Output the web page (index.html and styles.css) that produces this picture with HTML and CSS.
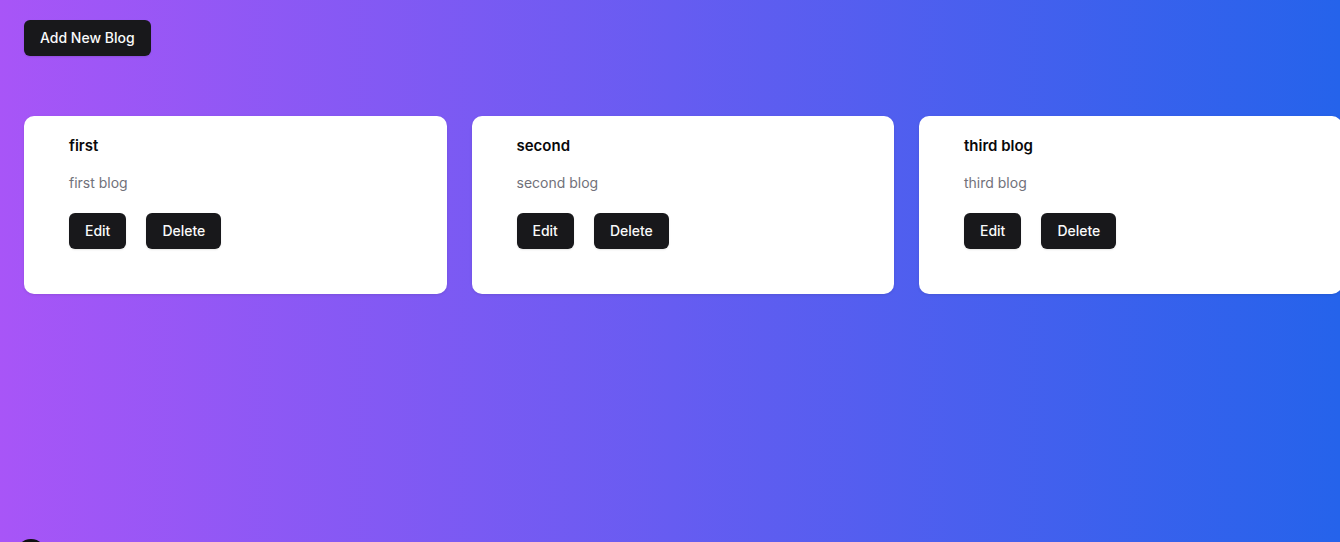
FILE: index.html
```html
<!DOCTYPE html>
<html>
<head>
<meta charset="utf-8">
<link rel="stylesheet" href="styles.css">
</head>
<body>
<main class="page">
  <div class="toolbar">
    <button class="btn">Add New Blog</button>
  </div>
  <div class="grid">
    <div class="card">
      <h2 class="title">first</h2>
      <p class="desc">first blog</p>
      <div class="actions">
        <button class="btn">Edit</button>
        <button class="btn">Delete</button>
      </div>
    </div>
    <div class="card">
      <h2 class="title">second</h2>
      <p class="desc">second blog</p>
      <div class="actions">
        <button class="btn">Edit</button>
        <button class="btn">Delete</button>
      </div>
    </div>
    <div class="card">
      <h2 class="title">third blog</h2>
      <p class="desc">third blog</p>
      <div class="actions">
        <button class="btn">Edit</button>
        <button class="btn">Delete</button>
      </div>
    </div>
  </div>
</main>
<div class="dev-dot"></div>
</body>
</html>
```
FILE: styles.css
```css
html, body {
  margin: 0;
  padding: 0;
  height: 100%;
  overflow: hidden;
}
body {
  font-family: Inter, "Liberation Sans", sans-serif;
  background: linear-gradient(to right, #a855f7, #2563eb);
}
.page {
  padding: 20px 0 0 24px;
}
.toolbar {
  display: flex;
}
.btn {
  font-family: Inter, "Liberation Sans", sans-serif;
  font-size: 14px;
  font-weight: 500;
  line-height: 20px;
  color: #fafafa;
  background: #18181b;
  border: none;
  border-radius: 6px;
  height: 36px;
  padding: 0 16px;
  box-shadow: 0 1px 2px rgba(0,0,0,0.1);
  cursor: pointer;
}
.grid {
  margin-top: 60px;
  display: grid;
  grid-template-columns: repeat(3, 422.5px);
  column-gap: 25px;
  width: 1318px;
}
.card {
  background: #ffffff;
  border-radius: 10px;
  padding: 19px 45px 45px;
  height: 178px;
  box-sizing: border-box;
  box-shadow: 0 1px 3px rgba(0,0,0,0.1);
}
.title {
  margin: 0;
  font-size: 15px;
  font-weight: 600;
  line-height: 22px;
  color: #09090b;
}
.desc {
  margin: 15px 0 0;
  font-size: 14px;
  line-height: 22px;
  color: #71717a;
}
.actions {
  margin-top: 19px;
  display: flex;
  gap: 20px;
}
.dev-dot {
  position: fixed;
  left: 16px;
  top: 539px;
  width: 30px;
  height: 30px;
  border-radius: 50%;
  background: #111;
}
```
